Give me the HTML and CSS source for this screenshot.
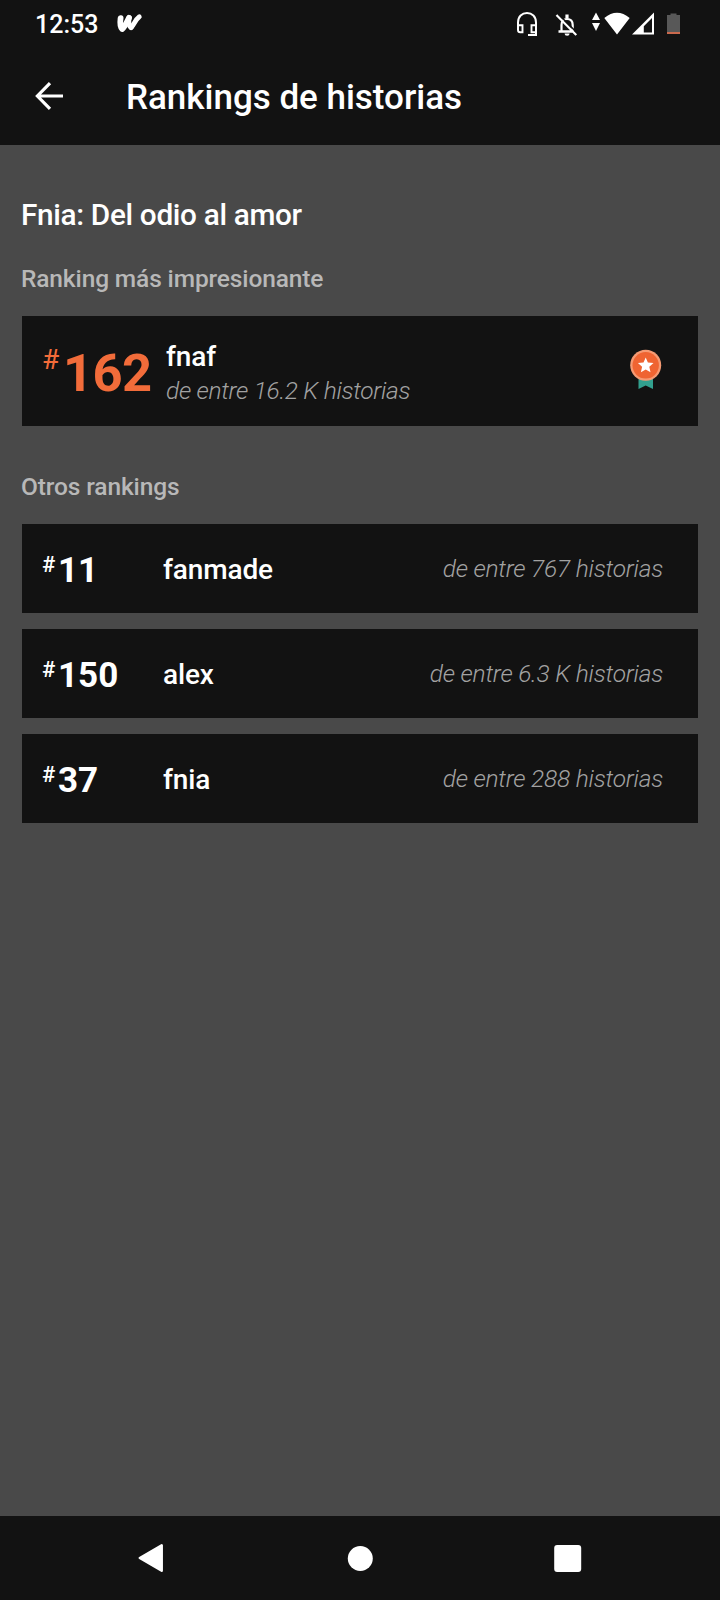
FILE: index.html
```html
<!DOCTYPE html>
<html lang="es">
<head>
<meta charset="utf-8">
<title>Rankings de historias</title>
<link rel="stylesheet" href="styles.css">
</head>
<body>
<div class="screen">
  <div class="status">
    <span class="clock">12:53</span>
    <svg class="wattpad" width="26" height="19" viewBox="0 0 26 19" fill="none" stroke="#fff" stroke-linecap="round" stroke-linejoin="round"><path d="M3.600 4.200C3 8.500 3.500 13.500 5.200 15 7.500 13.500 9.500 8.500 12 3.800" stroke-width="5.800"/><path d="M12 3.800C11.300 7.500 11.800 11.500 14 13.500" stroke-width="5.200"/><path d="M14.500 13.200C17 10.500 18.500 5.500 22.300 2.800" stroke-width="4.800"/></svg>
    <svg class="icons" width="184" height="30" viewBox="0 0 184 30" fill="none" stroke="#fff" stroke-width="2">
      <path d="M2 24V16.500C2 10.500 6 7 11 7s9 3.500 9 9.500V29H12"/><path d="M2 19.300h4.500v7H4.300Q2 26.300 2 24zM20 19.300h-4.500v7H20z" stroke-width="1.900"/>
      <path d="M45.500 25.500V19c0-4 2.500-6 5.500-6 3.700 0 5.700 2.300 5.700 6v6" stroke-width="2.200"/><path d="M51 8.500v4" stroke-width="3.200"/><path d="M42.500 25.500H57M40.500 9 60.300 29" stroke-width="2.300"/><path d="M48.600 27.500h5a2.500 2.200 0 0 1-5 0z" fill="#fff" stroke="none"/><path d="M42.300 8 62 27.800" stroke="#121212" stroke-width="1.500"/>
      <path d="M80 6.500 84 14h-8zM80 25 76 17h8zM88.300 12Q101 1.500 113.700 12L101 28.500z" fill="#fff" stroke="none"/>
      <path d="M138 6.500V28.500H116zM136 12 127.800 20.200V26.500H136z" fill="#fff" fill-rule="evenodd" stroke="none"/>
      <path d="M151 9h3.500V7.500h6V9h3.500V26H151z" fill="#585858" stroke="none"/><path d="M151 26h13v2h-13z" fill="#c9694d" stroke="none"/>
    </svg>
  </div>
  <header class="appbar">
    <svg class="back" width="28" height="28" viewBox="0 0 28 28" fill="none" stroke="#fff" stroke-width="3.200"><path d="M28 14H2.500M15 1.200 2.400 14 15 26.800"/></svg>
    <span class="bar-title">Rankings de historias</span>
  </header>
  <main class="content">
    <h1 class="story">Fnia: Del odio al amor</h1>
    <h2 class="section">Ranking más impresionante</h2>
    <div class="best">
      <span class="hash">#</span><span class="num">162</span>
      <div class="info"><div class="tag">fnaf</div><div class="of">de entre 16.2 K historias</div></div>
      <svg class="medal" width="32" height="40" viewBox="0 0 32 40"><path d="M8.500 25h14.500v14L15.700 35.500 8.500 39z" fill="#32a08e"/><circle cx="15.700" cy="15.300" r="15.500" fill="#f59a73"/><circle cx="15.700" cy="15.300" r="13.200" fill="#ef6432"/><path d="m15.700 7.500 2.200 5.100 5.600.5-4.200 3.700 1.200 5.400-4.800-2.800-4.800 2.800 1.200-5.400L7.900 13.100l5.600-.5z" fill="#fff"/></svg>
    </div>
    <h2 class="section other">Otros rankings</h2>
    <div class="list">
      <div class="row"><span class="hash">#</span><span class="num">11</span><span class="tag">fanmade</span><span class="of">de entre 767 historias</span></div>
      <div class="row"><span class="hash">#</span><span class="num">150</span><span class="tag">alex</span><span class="of">de entre 6.3 K historias</span></div>
      <div class="row"><span class="hash">#</span><span class="num">37</span><span class="tag">fnia</span><span class="of">de entre 288 historias</span></div>
    </div>
  </main>
  <nav class="nav">
    <svg width="26" height="30" viewBox="0 0 26 30"><path d="M1.800 15 23.700 2.300V27.700z" fill="#fff" stroke="#fff" stroke-width="2.500" stroke-linejoin="round"/></svg>
    <svg width="26" height="26" viewBox="0 0 26 26"><circle cx="14.300" cy="13.500" r="12.500" fill="#fff"/></svg>
    <svg width="28" height="28" viewBox="0 0 28 28"><rect x=".2" y="1" width="27" height="27" rx="3" fill="#fff"/></svg>
  </nav>
</div>
</body>
</html>
```
FILE: styles.css
```css
* { box-sizing: border-box; }
body { margin: 0; background: #494949; color: #fff; font-family: Roboto, sans-serif; }
svg { display: block; flex: none; overflow: visible; }
.screen { width: 720px; height: 1600px; display: flex; flex-direction: column; }
.status { height: 48px; background: #121212; display: flex; align-items: flex-start; padding-left: 35px; }
.clock { font-size: 25px; font-weight: 500; line-height: 30px; margin-top: 10px; width: 82px; }
.wattpad { margin-top: 14px; }
.icons { margin: 6px 20px 0 auto; }
.appbar { height: 97px; background: #121212; display: flex; align-items: center; padding-left: 35px; }
.back { margin-top: -2px; }
.bar-title { font-size: 35px; font-weight: 500; line-height: 46px; letter-spacing: -.02px; margin-left: 63px; padding-top: 3px; white-space: nowrap; }
.content { flex: 1; padding: 50px 22px 0; }
.story { margin: 0; font-size: 29.750px; font-weight: 500; line-height: 40px; letter-spacing: -.33px; margin-left: -1px; }
.section { margin: 29px 0 22px -1px; font-size: 24.500px; font-weight: 500; line-height: 30px; letter-spacing: -.13px; color: #b8b8b8; }
.section.other { margin-top: 46px; }
.best { height: 110px; background: #121212; display: flex; align-items: flex-start; padding: 0 36px 0 20px; }
.best .hash { font-size: 28px; line-height: 34px; color: #f26c3a; margin-top: 27px; width: 21px; }
.best .num { font-size: 52.500px; line-height: 60px; font-weight: 700; letter-spacing: -.6px; color: #f26c3a; margin-top: 27px; width: 103px; }
.best .info { flex: 1; margin-top: 24px; }
.tag { font-size: 28px; line-height: 34px; font-weight: 500; letter-spacing: -.12px; }
.of { font-size: 24.500px; line-height: 34px; font-weight: 300; font-style: italic; letter-spacing: -.3px; color: #a2a2a2; white-space: nowrap; }
.medal { margin-top: 34px; }
.list { display: flex; flex-direction: column; gap: 16px; }
.row { height: 89px; background: #121212; display: flex; align-items: flex-start; padding: 0 35px 0 20px; }
.row .hash { font-size: 22px; line-height: 26px; font-weight: 500; margin-top: 28px; width: 16px; }
.row .num { font-size: 35px; line-height: 40px; font-weight: 700; margin-top: 27px; width: 105px; }
.row .tag { margin-top: 29px; flex: 1; }
.row .of { margin-top: 28px; letter-spacing: -.22px; }
.nav { height: 84px; background: #121212; display: flex; align-items: center; justify-content: space-between; padding: 0 138px; }
```
